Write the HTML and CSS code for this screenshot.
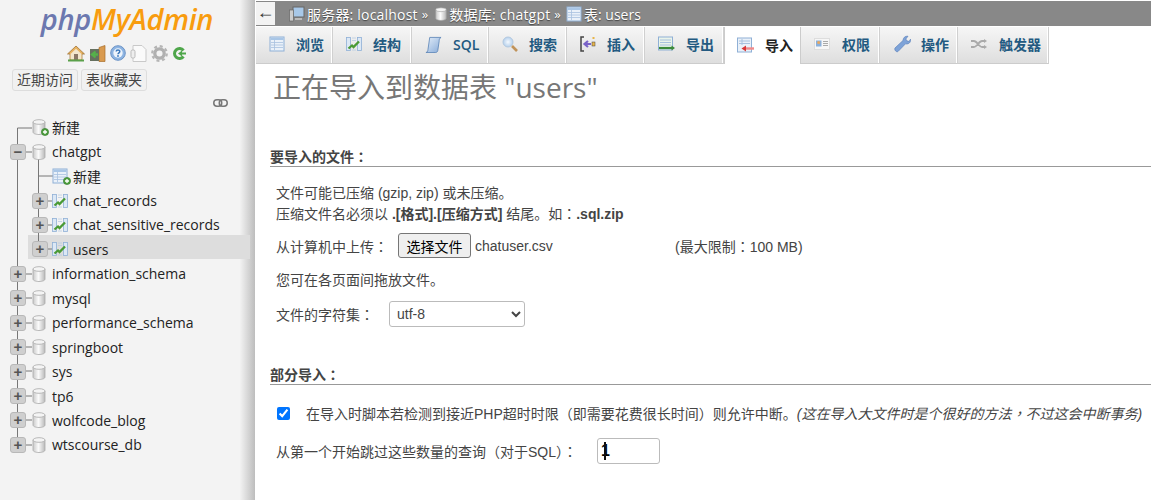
FILE: index.html
```html
<!DOCTYPE html>
<html lang="zh-CN">
    <head>
        <meta charset="UTF-8">
        <title>phpMyAdmin</title>
        <link rel="stylesheet" href="styles.css">
    </head>
    <body>
        <svg class="icon_defs" width="0" height="0">
            <defs>
                <linearGradient id="db_fill" x1="0" x2="1" y1="0" y2="0">
                    <stop offset="0" stop-color="#c9c9c9"/><stop offset="0.45" stop-color="#fbfbfb"/><stop offset="1" stop-color="#b9b9b9"/>
                </linearGradient>
                <linearGradient id="tab_blue" x1="0" x2="1" y1="0" y2="1">
                    <stop offset="0" stop-color="#e4eef9"/><stop offset="1" stop-color="#86aad8"/>
                </linearGradient>
                <radialGradient id="lens_fill">
                    <stop offset="0" stop-color="#f4f9fe"/><stop offset="1" stop-color="#b5d0ec"/>
                </radialGradient>
                <symbol id="i_db" viewBox="0 0 14 16">
                    <path d="M1 3v10c0 1.500 2.500 2.500 6 2.500s6-1 6-2.500V3z" fill="url(#db_fill)" stroke="#aaa" stroke-width="0.8"/>
                    <ellipse cx="7" cy="3" rx="6" ry="2.300" fill="#f4f4f4" stroke="#aaa" stroke-width="0.8"/>
                </symbol>
                <symbol id="i_plus" viewBox="0 0 8 8">
                    <circle cx="4" cy="4" r="3.600" fill="#4f9e3e" stroke="#2f7a2a" stroke-width="0.6"/>
                    <path d="M2 4h4M4 2v4" stroke="#fff" stroke-width="1.300"/>
                </symbol>
                <symbol id="i_tree_table" viewBox="0 0 16 16">
                    <rect x="0.500" y="1.500" width="4" height="13" fill="#dce8f5" stroke="#8fb0d6" stroke-width="0.8"/>
                    <rect x="11.500" y="1.500" width="4" height="13" fill="#dce8f5" stroke="#8fb0d6" stroke-width="0.8"/>
                    <path d="M6 2h4M6 4.500h4M6 14h4" stroke="#b8cce2" stroke-width="0.8"/>
                    <path d="M2.500 12.500L6 9.500l1.500 1.500L13 5.500" fill="none" stroke="#4a9a35" stroke-width="2.300"/>
                </symbol>
                <symbol id="i_grid" viewBox="0 0 16 16">
                    <rect x="1" y="1" width="14" height="14" fill="#eaf1f9" stroke="#8fb0d6"/>
                    <rect x="1.500" y="1.500" width="13" height="2.500" fill="#a9c6e6"/>
                    <path d="M2 6.500h12M2 9h12M2 11.500h12M5.500 4v10" stroke="#a8c2df" stroke-width="0.8"/>
                </symbol>
            </defs>
        </svg>

        <aside class="sidebar">
            <div class="logo"><span class="logo_php">php</span><span class="logo_admin">MyAdmin</span></div>
            <div class="quick_icons">
                <svg width="18" height="17" viewBox="0 0 18 17"><path d="M9 1L0.500 9h2.500v6h12V9h2.500z" fill="#e6b15f" stroke="#9a6a2a" stroke-width="0.7"/><path d="M3.500 9L9 3.800 14.500 9v5.500h-11z" fill="#f3e6cc"/><rect x="7" y="9" width="4" height="6" fill="#8b7765"/><path d="M1 15.500h16" stroke="#5aa04a" stroke-width="2"/></svg>
                <svg width="17" height="17" viewBox="0 0 17 17"><path d="M10 2.500L16 0.500v16h-6z" fill="#d99a4e" stroke="#a86f2c" stroke-width="0.7"/><rect x="1" y="4" width="9" height="12" fill="#66705f"/><path d="M9 9.500H4M6.500 6.500L3 9.500l3.500 3" fill="none" stroke="#55b04a" stroke-width="2.300"/></svg>
                <svg width="16" height="16" viewBox="0 0 16 16"><circle cx="8" cy="8" r="7.300" fill="#8db4e2" stroke="#6d94c6"/><circle cx="8" cy="8" r="4.700" fill="#eef4fb"/><path d="M6.200 6.600C6.200 4.400 9.800 4.400 9.800 6.500 9.800 7.800 8 7.800 8 9.300" fill="none" stroke="#3b78bb" stroke-width="1.500"/><circle cx="8" cy="11" r="0.900" fill="#3b78bb"/></svg>
                <svg width="17" height="17" viewBox="0 0 17 17"><path d="M3 0.500h9l4 4v12H3z" fill="#fafafa" stroke="#c9c9c9"/><rect x="1" y="5" width="4" height="8" rx="1.500" fill="#eee" stroke="#bbb"/></svg>
                <svg width="17" height="17" viewBox="0 0 17 17"><circle cx="8.500" cy="8.500" r="4.700" fill="none" stroke="#b0b0b0" stroke-width="3.300"/><circle cx="8.500" cy="8.500" r="7.300" fill="none" stroke="#b5b5b5" stroke-width="2.200" stroke-dasharray="3 2.730"/></svg>
                <svg width="14" height="15" viewBox="0 0 14 15"><path d="M11.500 4.500A5 5 0 1 0 11.500 10.500" fill="none" stroke="#4ea64a" stroke-width="3"/><path d="M6 7.500L10 4.500v2h4v2h-4v2z" fill="#4ea64a"/></svg>
            </div>
            <div class="nav_buttons">
                <span class="nav_button">近期访问</span>
                <span class="nav_button">表收藏夹</span>
            </div>
            <div class="link_row">
                <svg width="15" height="8" viewBox="0 0 15 8"><rect x="0.750" y="0.750" width="8" height="6.500" rx="3.200" fill="none" stroke="#777" stroke-width="1.500"/><rect x="6.250" y="0.750" width="8" height="6.500" rx="3.200" fill="none" stroke="#777" stroke-width="1.500"/></svg>
            </div>

            <div class="tree">
                <svg class="tree_lines" width="60" height="340" viewBox="0 0 60 340">
                    <path d="M17.500 12V329M17.500 12H32M17.500 36H32M38.500 36V133M38.500 60H53M39 85H52M39 109H52M39 133H52M17.500 158H32M17.500 182H32M17.500 207H32M17.500 231H32M17.500 255H32M17.500 280H32M17.500 304H32M17.500 329H32" fill="none" stroke="#777" stroke-width="1"/>
                </svg>
                <div class="tree_row"><span class="no_expander"></span><span class="db_icon new_icon"><svg width="14" height="16"><use href="#i_db"/></svg><svg class="plus_badge" width="8" height="8"><use href="#i_plus"/></svg></span><span class="tree_name">新建</span></div>
                <div class="tree_row"><span class="expander">−</span><span class="db_icon"><svg width="14" height="16"><use href="#i_db"/></svg></span><span class="tree_name">chatgpt</span></div>
                <div class="tree_row level_two"><span class="no_expander"></span><span class="db_icon new_icon"><svg width="16" height="16"><use href="#i_grid"/></svg><svg class="plus_badge" width="8" height="8"><use href="#i_plus"/></svg></span><span class="tree_name">新建</span></div>
                <div class="tree_row level_two"><span class="expander">+</span><span class="db_icon"><svg width="16" height="16"><use href="#i_tree_table"/></svg></span><span class="tree_name">chat_records</span></div>
                <div class="tree_row level_two"><span class="expander">+</span><span class="db_icon"><svg width="16" height="16"><use href="#i_tree_table"/></svg></span><span class="tree_name">chat_sensitive_records</span></div>
                <div class="tree_row level_two selected"><span class="expander">+</span><span class="db_icon"><svg width="16" height="16"><use href="#i_tree_table"/></svg></span><span class="tree_name">users</span></div>
                <div class="tree_row"><span class="expander">+</span><span class="db_icon"><svg width="14" height="16"><use href="#i_db"/></svg></span><span class="tree_name">information_schema</span></div>
                <div class="tree_row"><span class="expander">+</span><span class="db_icon"><svg width="14" height="16"><use href="#i_db"/></svg></span><span class="tree_name">mysql</span></div>
                <div class="tree_row"><span class="expander">+</span><span class="db_icon"><svg width="14" height="16"><use href="#i_db"/></svg></span><span class="tree_name">performance_schema</span></div>
                <div class="tree_row"><span class="expander">+</span><span class="db_icon"><svg width="14" height="16"><use href="#i_db"/></svg></span><span class="tree_name">springboot</span></div>
                <div class="tree_row"><span class="expander">+</span><span class="db_icon"><svg width="14" height="16"><use href="#i_db"/></svg></span><span class="tree_name">sys</span></div>
                <div class="tree_row"><span class="expander">+</span><span class="db_icon"><svg width="14" height="16"><use href="#i_db"/></svg></span><span class="tree_name">tp6</span></div>
                <div class="tree_row"><span class="expander">+</span><span class="db_icon"><svg width="14" height="16"><use href="#i_db"/></svg></span><span class="tree_name">wolfcode_blog</span></div>
                <div class="tree_row"><span class="expander">+</span><span class="db_icon"><svg width="14" height="16"><use href="#i_db"/></svg></span><span class="tree_name">wtscourse_db</span></div>
            </div>
        </aside>

        <main class="main">
            <div class="crumbs">
                <span class="back_button">←</span>
                <svg class="crumb_icon" width="16" height="16" viewBox="0 0 16 16"><rect x="4" y="1" width="11" height="10" fill="#a8c8e8" stroke="#666"/><rect x="0.500" y="4" width="4" height="11" fill="#ccc" stroke="#666" stroke-width="0.7"/><rect x="6" y="12" width="7" height="2" fill="#bbb"/></svg>
                <span>服务器: localhost</span><span class="crumb_sep">»</span>
                <svg class="crumb_icon crumb_db" width="12" height="14" viewBox="0 0 14 16"><use href="#i_db"/></svg>
                <span>数据库: chatgpt</span><span class="crumb_sep">»</span>
                <svg class="crumb_icon" width="16" height="16"><use href="#i_grid"/></svg>
                <span class="crumb_last">表: users</span>
            </div>

            <nav class="tabs">
                <a class="tab tab_browse"><svg width="16" height="16"><use href="#i_grid"/></svg>浏览</a>
                <a class="tab tab_struct"><svg width="16" height="16"><use href="#i_tree_table"/></svg>结构</a>
                <a class="tab tab_sql"><svg width="17" height="17" viewBox="0 0 18 18"><path d="M5 1.500h12c-2 1-2 2.500-2 4l-1.500 10c-.3 1.500-1.500 2-2.500 2H1c2-.5 2-2 2.200-3.500z" fill="url(#tab_blue)" stroke="#5f86b8" stroke-width="0.9"/></svg>SQL</a>
                <a class="tab tab_search"><svg width="16" height="16" viewBox="0 0 16 16"><circle cx="6" cy="6" r="5" fill="url(#lens_fill)" stroke="#b3c9e0"/><path d="M10 10l5 5" stroke="#c0935a" stroke-width="2.600"/></svg>搜索</a>
                <a class="tab tab_insert"><svg width="16" height="16" viewBox="0 0 16 16"><path d="M4 1H1v14h3" fill="none" stroke="#444" stroke-width="1.500"/><path d="M11 8H5M8 5L4.500 8 8 11" fill="none" stroke="#7a63c8" stroke-width="2.200"/><rect x="12" y="6" width="3" height="4" fill="#e8b54a" stroke="#444" stroke-width="0.5"/><rect x="12.500" y="1" width="2" height="2" fill="#e8b54a"/></svg>插入</a>
                <a class="tab tab_export"><svg width="17" height="16" viewBox="0 0 17 16"><rect x="0.500" y="1" width="14" height="13" fill="#eaf4ea" stroke="#8fb0d6"/><path d="M2 4h11M2 6.500h11M2 9h11" stroke="#a8c2df"/><path d="M1 12h13" stroke="#3b8a3b" stroke-width="2.200"/><path d="M13.500 9.500L17 12l-3.500 2.500z" fill="#3b8a3b"/></svg>导出</a>
                <a class="tab tab_import active"><svg width="17" height="16" viewBox="0 0 17 16"><rect x="0.500" y="1" width="14" height="14" fill="#eaf1f9" stroke="#8fb0d6"/><path d="M2 4h11M2 6.500h11M5 2v6" stroke="#a8c2df"/><path d="M7 11.500h10" stroke="#f08a8a" stroke-width="2.400"/><path d="M9 8.500L4.500 11.500 9 14.500z" fill="#d83838"/></svg>导入</a>
                <a class="tab tab_priv"><svg width="16" height="12" viewBox="0 0 16 12"><rect x="0.500" y="0.500" width="15" height="11" fill="#f6f6f6" stroke="#ddd"/><rect x="2" y="2.500" width="5.500" height="6" fill="#8ab0dc"/><circle cx="4.700" cy="4.500" r="1.500" fill="#e8a860"/><path d="M9 3.500h5M9 5.500h5M9 7.500h5" stroke="#aaa"/></svg>权限</a>
                <a class="tab tab_ops"><svg width="18" height="18" viewBox="0 0 18 18"><path d="M2 13L10 5.500C10 3 12 .8 15 1.200L12.800 4l1 1.800L16 6.500l1.500-2.300C18 7.500 15.500 9.500 12.500 8.800L5 16.500C3.500 17.500 1 15 2 13z" fill="#7ea3d8" stroke="#5d83bb" stroke-width="0.7"/></svg>操作</a>
                <a class="tab tab_trigger"><svg width="16" height="10" viewBox="0 0 16 10"><path d="M0 2h3c3 0 5 6 8 6h3M0 8h3c3 0 5-6 8-6h3" fill="none" stroke="#aaa" stroke-width="1.800"/><path d="M13 0l3 2-3 2zM13 6l3 2-3 2z" fill="#aaa"/></svg>触发器</a>
            </nav>

            <div class="page">
                <h2 class="page_title">正在导入到数据表 "users"</h2>

                <section class="form_section file_section">
                    <h3 class="legend">要导入的文件<span class="mid">：</span></h3>
                    <div class="hint">
                        文件可能已压缩 (gzip, zip) 或未压缩。<br>
                        压缩文件名必须以 <b>.[格式].[压缩方式]</b> 结尾。如<span class="mid">：</span><b>.sql.zip</b>
                    </div>
                    <div class="upload_row">
                        <label class="upload_label">从计算机中上传<span class="mid">：</span></label>
                        <button class="file_button" type="button">选择文件</button>
                        <span class="file_name">chatuser.csv</span>
                        <span class="size_limit">(最大限制<span class="mid">：</span>100 MB)</span>
                    </div>
                    <div class="drop_hint">您可在各页面间拖放文件。</div>
                    <div class="charset_row">
                        <label class="charset_label">文件的字符集<span class="mid">：</span></label>
                        <select class="charset_select"><option>utf-8</option></select>
                    </div>
                </section>

                <section class="form_section partial_section">
                    <h3 class="legend">部分导入<span class="mid">：</span></h3>
                    <div class="interrupt_row">
                        <input class="interrupt_check" type="checkbox" checked>
                        <span>在导入时脚本若检测到接近PHP超时时限<span class="mid">（</span>即需要花费很长时间<span class="mid">）</span>则允许中断。<i>(这在导入大文件时是个很好的方法<span class="mid">，</span>不过这会中断事务)</i></span>
                    </div>
                    <div class="skip_row">
                        <label class="skip_label">从第一个开始跳过这些数量的查询<span class="mid">（</span>对于SQL<span class="mid">）：</span></label>
                        <span class="skip_field">
                            <input class="skip_input" type="text" value="1">
                            <span class="skip_caret"></span>
                        </span>
                    </div>
                </section>
            </div>
        </main>
    </body>
</html>
```

FILE: styles.css
```css
html, body {
    width: 1151px;
    height: 500px;
    margin: 0px;
    padding: 0px;
    overflow: hidden;
}

body {
    display: flex;
    background: #ffffff;
    color: #444444;
    font-family: "Open Sans", "Noto Sans CJK SC", sans-serif;
    font-size: 14px;
}

.icon_defs { position: absolute; }

/* full width punctuation sits in the middle of its box in the original */
.mid {
    font-family: "Noto Sans CJK TC", sans-serif;
    font-feature-settings: "locl" 0;
}

/* sidebar */
.sidebar {
    position: relative;
    flex: 0 0 255px;
    width: 255px;
    height: 500px;
    background: linear-gradient(to right, #f3f3f3 94%, #d8d8d8 97%, #bdbdbd 100%);
}

.logo {
    height: 36px;
    text-align: center;
    padding-right: 1px;
    font-family: "Open Sans", sans-serif;
    font-size: 29px;
    line-height: 37px;
    font-style: italic;
    font-weight: 600;
    letter-spacing: -0.3px;
}
.logo_php { color: #6c78af; }
.logo_admin { color: #f89c0e; }

.quick_icons {
    display: flex;
    justify-content: center;
    align-items: center;
    gap: 4px;
    margin-top: 8px;
    padding-right: 3px;
    height: 18px;
}

.nav_buttons {
    display: flex;
    gap: 3px;
    margin: 7px 0px 0px 12px;
}

.nav_button {
    padding: 0px 4px;
    height: 20px;
    line-height: 19px;
    border: solid 1px #dddddd;
    border-radius: 3px;
    background: #f1f1f1;
    font-size: 14px;
}

.link_row {
    display: flex;
    justify-content: flex-end;
    margin-top: 8px;
    padding-right: 27px;
    height: 8px;
    line-height: 8px;
}

.tree {
    position: relative;
    isolation: isolate;
    margin-top: 8px;
    color: #222222;
}

.tree_lines {
    position: absolute;
    top: 1px;
    left: 0px;
}

.tree_row {
    position: relative;
    display: flex;
    align-items: center;
    height: 24.45px;
    padding-left: 10px;
    white-space: nowrap;
}

.level_two { padding-left: 32px; }

.selected::before {
    content: "";
    position: absolute;
    z-index: -1;
    top: -2px;
    left: 28px;
    width: 222px;
    height: 24px;
    background: #dddddd;
}

.expander {
    position: relative;
    flex: 0 0 14px;
    width: 14px;
    height: 14px;
    margin-right: 6px;
    border: solid 1px #b8b8b8;
    border-radius: 3px;
    background: #cfcfcf;
    color: #555555;
    font: bold 15px/13px "Liberation Sans", sans-serif;
    text-align: center;
}

.no_expander {
    flex: 0 0 22px;
    width: 22px;
    height: 14px;
}

.db_icon {
    position: relative;
    display: flex;
    flex: 0 0 auto;
    margin-right: 6px;
    width: 14px;
}
.level_two .db_icon { width: 16px; margin-left: -2px; margin-right: 5px; }

.plus_badge {
    position: absolute;
    right: -3px;
    bottom: -1px;
}

.tree_name { position: relative; }

/* top bar */
.main {
    flex: 1 1 auto;
    min-width: 0px;
    height: 500px;
    padding-left: 1px;
}

.crumbs {
    display: flex;
    align-items: center;
    height: 25px;
    margin-top: 1px;
    background: #888888;
    color: #ffffff;
    font-size: 14px;
    letter-spacing: 0.2px;
    text-shadow: 0px 1px 1px #444444;
    white-space: nowrap;
}

.back_button {
    flex: 0 0 19px;
    height: 23px;
    margin-right: 14px;
    background: #f3f3f3;
    color: #333333;
    font: 18px/20px "Liberation Sans", sans-serif;
    text-align: center;
    text-shadow: none;
}

.crumb_icon { margin-right: 2px; }
.crumb_db { margin-left: 2px; }
.crumb_sep { margin: 0px 5px 0px 4px; font-size: 13px; }
.crumb_last { letter-spacing: 0px; }

.tabs {
    display: flex;
    height: 37px;
    margin-top: 1px;
}

.tab {
    display: flex;
    align-items: center;
    box-sizing: border-box;
    height: 37px;
    padding: 0px 0px 2px 13px;
    border-right: solid 1px #d0d0d0;
    border-bottom: solid 1px #cccccc;
    box-shadow: inset -1px 0px 0px #ffffff;
    background: linear-gradient(#f6f6f6, #dedede);
    color: #235a81;
    font-size: 14px;
    font-weight: 600;
    white-space: nowrap;
}
.tab svg { margin-right: 11px; }

.tab_browse { width: 77px; }
.tab_struct { width: 79px; }
.tab_sql { width: 77px; }
.tab_search { width: 78px; }
.tab_insert { width: 78px; }
.tab_export { width: 79px; }
.tab_import { width: 77px; }
.tab_priv { width: 79px; }
.tab_ops { width: 78px; }
.tab_trigger { width: 91px; }

.tab_ops svg { margin-right: 10px; }
.tab_priv svg, .tab_trigger svg { margin-right: 12px; }

.tab.active {
    padding-left: 12px;
    background: #ffffff;
    border-left: solid 1px #cccccc;
    border-right: solid 1px #cccccc;
    border-bottom: none;
    box-shadow: none;
    color: #222222;
}

/* page body */
.page { padding-left: 14px; }

.page_title {
    margin: 0px 0px 0px 3px;
    padding-top: 4px;
    padding-bottom: 1px;
    font-size: 28px;
    font-weight: 400;
    line-height: 38px;
    color: #777777;
}

.legend {
    margin: 0px;
    height: 20px;
    line-height: 18px;
    border-bottom: solid 1px #999999;
    box-sizing: border-box;
    font-size: 14px;
    font-weight: bold;
    color: #444444;
}

.file_section { margin-top: 40px; }
.partial_section { margin-top: 38px; }

.hint {
    margin: 16px 0px 0px 6px;
    line-height: 20px;
    font-family: "Liberation Sans", "Noto Sans CJK SC", sans-serif;
}

.upload_row, .charset_row, .skip_row, .interrupt_row {
    display: flex;
    align-items: center;
    margin-left: 6px;
    white-space: nowrap;
    font-family: "Liberation Sans", "Noto Sans CJK SC", sans-serif;
}

.upload_row { margin-top: 9px; height: 25px; }
.upload_label { width: 122px; }

.file_button {
    width: 73px;
    height: 25px;
    padding: 0px;
    border: solid 1px #767676;
    border-radius: 3px;
    background: #efefef;
    color: #000000;
    font: 14px "Liberation Sans", "Noto Sans CJK SC", sans-serif;
}

.file_name { margin-left: 4px; width: 200px; }

.drop_hint {
    margin: 11px 0px 0px 6px;
    font-family: "Liberation Sans", "Noto Sans CJK SC", sans-serif;
}

.charset_row { margin-top: 12px; height: 26px; }
.charset_label { width: 113px; }

.charset_select {
    width: 136px;
    height: 26px;
    padding-left: 3px;
    border: solid 1px #bbbbbb;
    border-radius: 3px;
    background: #ffffff;
    color: #444444;
    font: 14px "Liberation Sans", sans-serif;
}

.interrupt_row { margin-top: 18px; height: 20px; }
.interrupt_check { width: 13px; height: 13px; margin: 0px 16px 0px 1px; }
.interrupt_row i { font-style: italic; }

.skip_row { margin-top: 15px; height: 26px; }
.skip_label { width: 321px; }

.skip_field { position: relative; display: flex; }

.skip_input {
    box-sizing: border-box;
    width: 63px;
    height: 26px;
    padding: 0px 3px;
    border: solid 1px #bbbbbb;
    border-radius: 3px;
    color: #000000;
    font: bold 16px "Liberation Sans", sans-serif;
}

.skip_caret {
    position: absolute;
    top: 4px;
    left: 7px;
    width: 2px;
    height: 18px;
    background: #111111;
}
```
